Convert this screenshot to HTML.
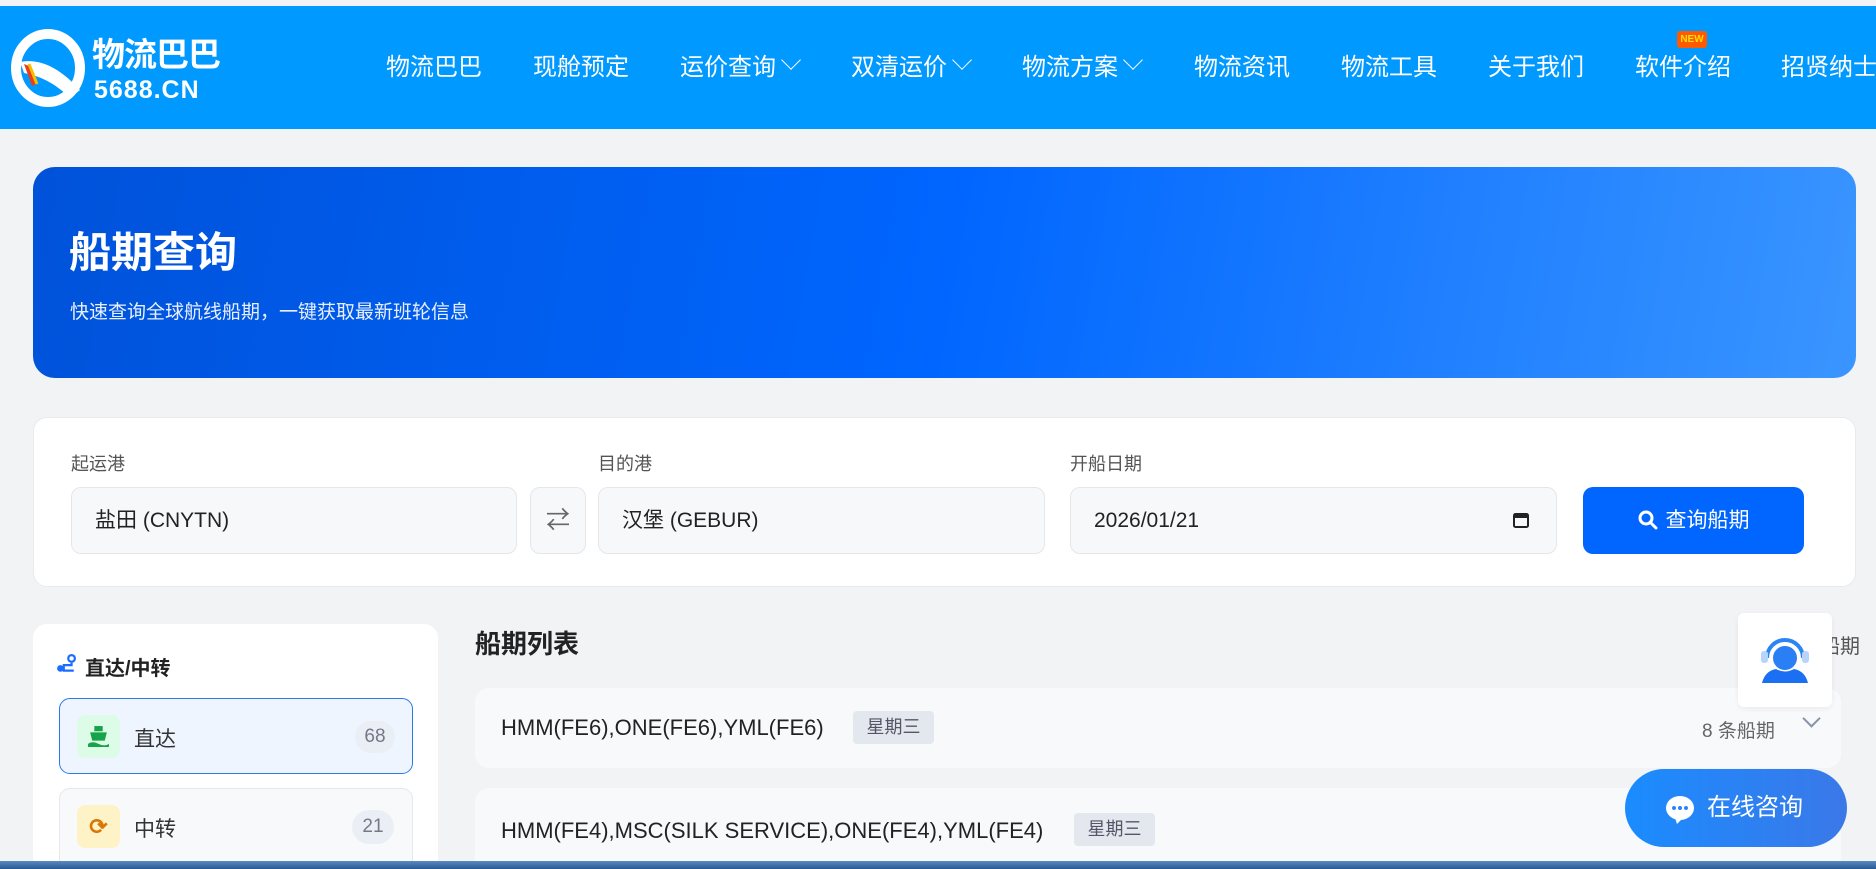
<!DOCTYPE html>
<html><head><meta charset="utf-8"><style>
*{box-sizing:border-box;margin:0;padding:0}
html,body{width:1876px;height:869px;overflow:hidden}
body{background:#f2f3f5;font-family:"Liberation Sans","Noto Sans CJK SC",sans-serif;position:relative}
.a{position:absolute}
.nav{left:0;top:6px;width:1876px;height:123px;background:#0099ff}
.ni{top:52px;color:#fff;font-size:24px;line-height:32px;white-space:nowrap}
.chev{display:inline-block;width:14px;height:14px;border-right:1.5px solid #fff;border-bottom:1.5px solid #fff;transform:rotate(45deg);margin-left:8px;position:relative;top:-8px}
.card{background:#fff;border-radius:14px}
.inp{background:#f7f8fa;border:1px solid #e3e6eb;border-radius:10px;height:67px;font-size:21px;color:#222;line-height:65px;padding-left:23px}
.lbl{font-size:18px;color:#555}
</style></head><body>
<div class="a nav"></div>
<svg class="a" style="left:10px;top:28px" width="80" height="80" viewBox="0 0 80 80"><ellipse cx="38" cy="40" rx="32" ry="34" fill="none" stroke="#fff" stroke-width="10"/><path d="M10 34 C30 30 50 40 70 62 L60 70 C45 55 30 48 14 45Z" fill="#fff"/><path d="M14 36 L22 58 L26 56 L19 38Z" fill="#e8401c"/><path d="M19 36 L27 56" stroke="#f5c000" stroke-width="3"/></svg>
<div class="a" style="left:92px;top:36px;color:#fff;font-size:33px;font-weight:bold;line-height:38px;letter-spacing:-1px">物流巴巴</div>
<div class="a" style="left:94px;top:76px;color:#fff;font-size:25px;font-weight:bold;line-height:28px;letter-spacing:1px">5688.CN</div>
<div class="a ni" style="left:386px">物流巴巴</div>
<div class="a ni" style="left:533px">现舱预定</div>
<div class="a ni" style="left:680px">运价查询<span class="chev"></span></div>
<div class="a ni" style="left:851px">双清运价<span class="chev"></span></div>
<div class="a ni" style="left:1022px">物流方案<span class="chev"></span></div>
<div class="a ni" style="left:1194px">物流资讯</div>
<div class="a ni" style="left:1341px">物流工具</div>
<div class="a ni" style="left:1488px">关于我们</div>
<div class="a ni" style="left:1635px">软件介绍</div>
<div class="a" style="left:1677px;top:31px;width:30px;height:17px;background:#ff5a00;border-radius:3px;color:#ffe000;font-size:10px;font-weight:bold;text-align:center;line-height:17px">NEW</div>
<div class="a ni" style="left:1781px">招贤纳士</div>

<div class="a" style="left:33px;top:167px;width:1823px;height:211px;border-radius:22px;background:linear-gradient(100deg,#0052d9 0%,#0066ff 50%,#3a95ff 100%)"></div>
<div class="a" style="left:69px;top:227px;color:#fff;font-size:42px;font-weight:bold;line-height:52px">船期查询</div>
<div class="a" style="left:70px;top:300px;color:#e8f0ff;font-size:19px;line-height:26px">快速查询全球航线船期，一键获取最新班轮信息</div>

<div class="a card" style="left:33px;top:417px;width:1823px;height:170px;border:1px solid #e8eaee"></div>
<div class="a lbl" style="left:71px;top:450px">起运港</div>
<div class="a lbl" style="left:598px;top:450px">目的港</div>
<div class="a lbl" style="left:1070px;top:450px">开船日期</div>
<div class="a inp" style="left:71px;top:487px;width:446px">盐田 (CNYTN)</div>
<div class="a inp" style="left:530px;top:487px;width:56px;padding:0;text-align:center;color:#666;font-size:24px">⇄</div>
<div class="a inp" style="left:598px;top:487px;width:447px">汉堡 (GEBUR)</div>
<div class="a inp" style="left:1070px;top:487px;width:487px">2026/01/21</div>
<svg class="a" style="left:1512px;top:511px" width="18" height="18" viewBox="0 0 18 18"><rect x="2" y="3" width="14" height="13" rx="1.5" fill="none" stroke="#222" stroke-width="2"/><rect x="2" y="3" width="14" height="4" fill="#222"/></svg>
<div class="a" style="left:1583px;top:487px;width:221px;height:67px;background:#0066ff;border-radius:10px;color:#fff;font-size:21px;line-height:67px;text-align:center">
<svg width="20" height="20" viewBox="0 0 20 20" style="vertical-align:-3px;margin-right:8px"><circle cx="8" cy="8" r="6" fill="none" stroke="#fff" stroke-width="3"/><path d="M12.5 12.5 L18 18" stroke="#fff" stroke-width="3" stroke-linecap="round"/></svg>查询船期</div>

<div class="a card" style="left:33px;top:624px;width:405px;height:245px;border-radius:14px 14px 0 0"></div>
<svg class="a" style="left:56px;top:654px" width="20" height="20" viewBox="0 0 18 18"><circle cx="4" cy="13" r="3" fill="#1a6dff"/><circle cx="14" cy="4" r="3" fill="none" stroke="#1a6dff" stroke-width="2"/><path d="M14 8 V10 H7 V15 H16" fill="none" stroke="#1a6dff" stroke-width="2"/></svg>
<div class="a" style="left:85px;top:652px;font-size:20px;font-weight:bold;color:#222">直达/中转</div>
<div class="a" style="left:59px;top:698px;width:354px;height:76px;background:#eef5ff;border:1.5px solid #2b77f0;border-radius:11px"></div>
<div class="a" style="left:77px;top:715px;width:43px;height:43px;background:#dcfce7;border-radius:8px"></div>
<svg class="a" style="left:87px;top:725px" width="23" height="23" viewBox="0 0 22 22"><rect x="7" y="1" width="8" height="5" fill="#16a34a"/><path d="M3 7 H19 L17 15 H5Z" fill="#16a34a"/><path d="M1 18 Q5 15 11 18 Q17 21 21 18 V21 H1Z" fill="#16a34a"/></svg>
<div class="a" style="left:134px;top:723px;font-size:21px;color:#333">直达</div>
<div class="a" style="left:355px;top:721px;width:40px;height:32px;border-radius:16px;background:#eaeff6;color:#778;font-size:19px;text-align:center;line-height:32px">68</div>
<div class="a" style="left:59px;top:788px;width:354px;height:90px;background:#f8f9fb;border:1px solid #e5e7eb;border-radius:11px"></div>
<div class="a" style="left:77px;top:805px;width:43px;height:43px;background:#fef3c7;border-radius:8px;color:#d97706;font-size:22px;text-align:center;line-height:43px;font-weight:bold">⟳</div>
<div class="a" style="left:134px;top:813px;font-size:21px;color:#333">中转</div>
<div class="a" style="left:352px;top:810px;width:42px;height:34px;border-radius:17px;background:#eaeff6;color:#778;font-size:19px;text-align:center;line-height:34px">21</div>

<div class="a" style="left:475px;top:624px;font-size:26px;font-weight:bold;color:#222">船期列表</div>
<div class="a" style="left:1820px;top:630px;font-size:20px;color:#555">船期</div>
<div class="a" style="left:475px;top:688px;width:1366px;height:80px;background:#f8f9fb;border-radius:14px"></div>
<div class="a" style="left:501px;top:715px;font-size:22px;color:#222">HMM(FE6),ONE(FE6),YML(FE6)</div>
<div class="a" style="left:853px;top:711px;width:81px;height:33px;background:#e3e8ef;border-radius:4px;color:#556;font-size:18px;text-align:center;line-height:33px">星期三</div>
<div class="a" style="left:1702px;top:716px;font-size:19px;color:#666">8 条船期</div>
<div class="a" style="left:1805px;top:712px;width:13px;height:13px;border-right:2px solid #8894a8;border-bottom:2px solid #8894a8;transform:rotate(45deg)"></div>
<div class="a" style="left:475px;top:788px;width:1366px;height:90px;background:#f8f9fb;border-radius:14px"></div>
<div class="a" style="left:501px;top:818px;font-size:22px;color:#222">HMM(FE4),MSC(SILK SERVICE),ONE(FE4),YML(FE4)</div>
<div class="a" style="left:1074px;top:813px;width:81px;height:33px;background:#e3e8ef;border-radius:4px;color:#556;font-size:18px;text-align:center;line-height:33px">星期三</div>

<div class="a" style="left:1738px;top:613px;width:94px;height:94px;background:#fff;border-radius:6px;box-shadow:0 2px 6px rgba(0,0,0,.06)"></div>
<svg class="a" style="left:1759px;top:634px" width="52" height="52" viewBox="0 0 52 52"><path d="M8 24 A18 18 0 0 1 44 24" fill="none" stroke="#2b85f5" stroke-width="4"/><rect x="2" y="17" width="7" height="12" rx="3" fill="#b8d4fa"/><rect x="43" y="17" width="7" height="12" rx="3" fill="#b8d4fa"/><circle cx="26" cy="24" r="13" fill="#2b7ff5" stroke="#fff" stroke-width="2"/><path d="M3 49 Q6 37 17 35 Q26 40 35 35 Q46 37 49 49Z" fill="#1a6ff2"/></svg>
<div class="a" style="left:1625px;top:769px;width:222px;height:78px;border-radius:39px;background:linear-gradient(90deg,#1a8cff,#3b78e8);color:#fff;font-size:24px;line-height:78px;padding-left:82px">在线咨询</div>
<svg class="a" style="left:1665px;top:795px" width="30" height="30" viewBox="0 0 30 30"><ellipse cx="15" cy="13" rx="14" ry="12" fill="#fff"/><path d="M10 23 L12 29 L17 24Z" fill="#fff"/><circle cx="9" cy="13" r="2" fill="#2a86f5"/><circle cx="15" cy="13" r="2" fill="#2a86f5"/><circle cx="21" cy="13" r="2" fill="#2a86f5"/></svg>
<div class="a" style="left:0;top:861px;width:1876px;height:8px;background:linear-gradient(#5a8ac0,#2a5a95)"></div>
</body></html>
